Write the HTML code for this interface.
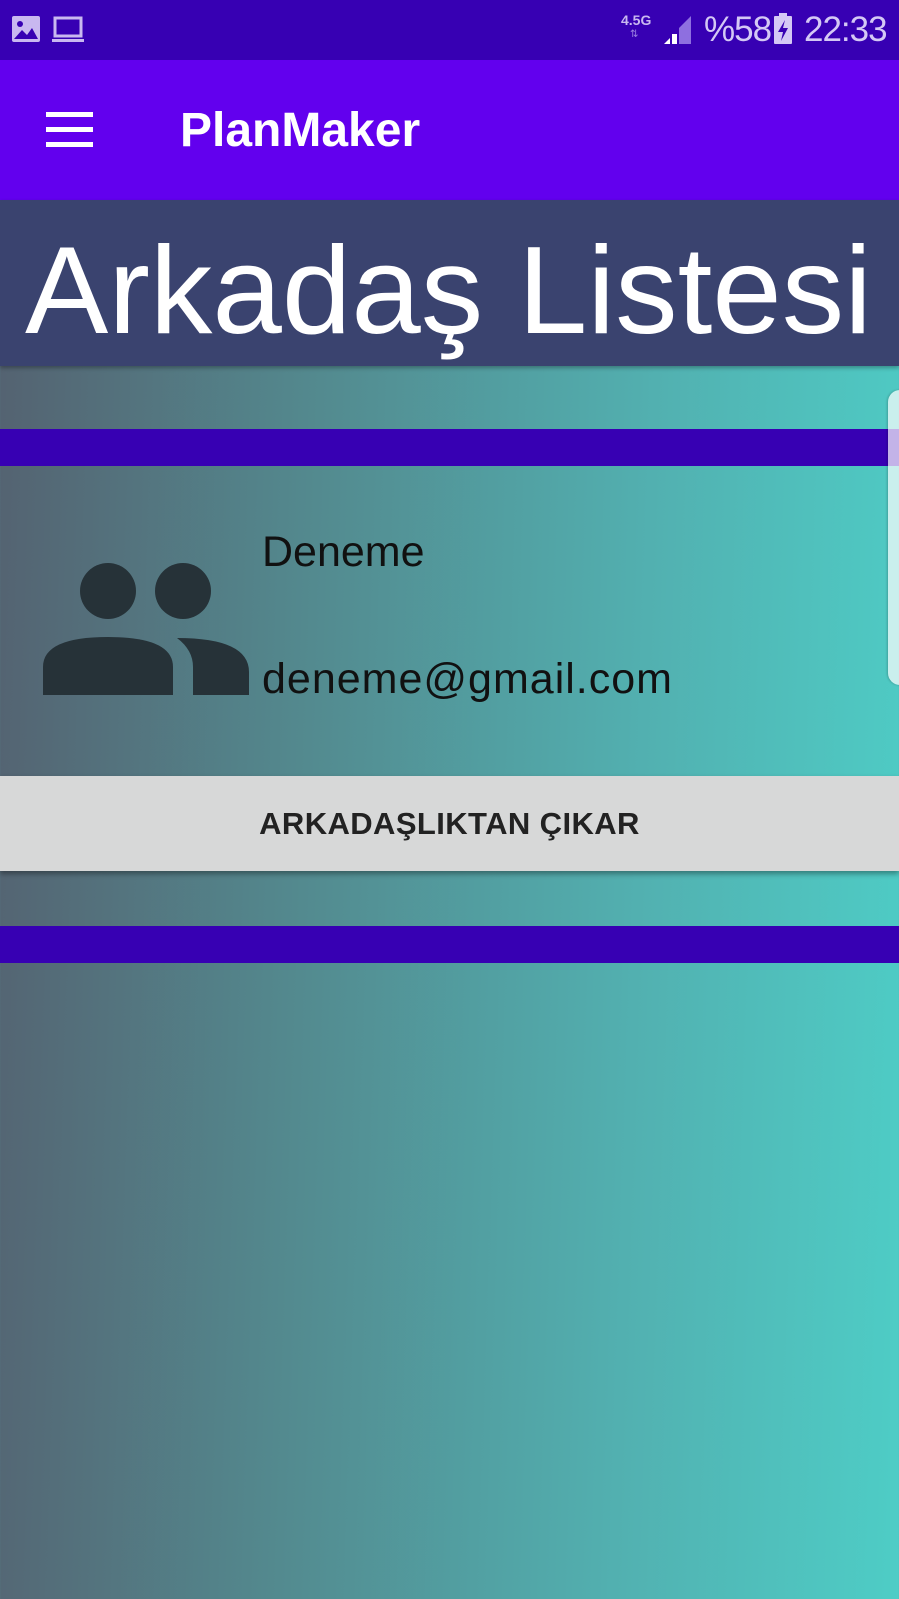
<!DOCTYPE html>
<html><head><meta charset="utf-8"><style>
*{margin:0;padding:0;box-sizing:border-box}
body{width:899px;height:1599px;overflow:hidden;font-family:"Liberation Sans",sans-serif;position:relative;background:linear-gradient(92deg,#546170 0%,#538a8f 35%,#52b0b0 70%,#4ecdc6 100%)}
.abs{position:absolute}
</style></head><body>
<div class="abs" style="left:0;top:0;width:899px;height:60px;background:#3700b3"></div>
<svg class="abs" style="left:11px;top:14px" width="80" height="32" viewBox="0 0 80 32">
<rect x="1" y="2" width="28" height="26" rx="2" fill="#c9b8f0"/>
<circle cx="9" cy="10" r="3" fill="#3700b3"/>
<path d="M3 25 L11 16 L16 21 L21 14 L27 25 Z" fill="#3700b3"/>
<rect x="44" y="4" width="26" height="18" fill="none" stroke="#c9b8f0" stroke-width="3"/>
<rect x="41" y="25" width="32" height="3" fill="#c9b8f0"/>
</svg>
<div class="abs" style="left:621px;top:12px;color:#c9b8f0;font-size:14px;font-weight:bold">4.5G</div>
<div class="abs" style="left:630px;top:29px;color:#9a80e0;font-size:10px">⇅</div>
<svg class="abs" style="left:662px;top:14px" width="30" height="30"><path d="M2 30 L8 30 L8 24 Z" fill="#fff"/><rect x="10" y="20" width="5" height="10" fill="#fff"/><path d="M17 14 L29 2 L29 30 L17 30 Z" fill="#8e6fe0"/></svg>
<div class="abs" style="left:704px;top:10px;color:#d4c8f5;font-size:35px;letter-spacing:-1px">%58</div>
<svg class="abs" style="left:773px;top:13px" width="20" height="32"><rect x="6" y="0" width="8" height="4" fill="#d4c8f5"/><rect x="1" y="3" width="18" height="28" rx="1" fill="#d4c8f5"/><path d="M12 7 L5 19 L10 19 L8 28 L15 15 L10 15 Z" fill="#3700b3"/></svg>
<div class="abs" style="left:804px;top:10px;color:#d4c8f5;font-size:35px;letter-spacing:-1px">22:33</div>
<div class="abs" style="left:0;top:60px;width:899px;height:140px;background:#6200ee"></div>
<div class="abs" style="left:46px;top:112px;width:47px;height:5px;background:#fff"></div>
<div class="abs" style="left:46px;top:127px;width:47px;height:5px;background:#fff"></div>
<div class="abs" style="left:46px;top:142px;width:47px;height:5px;background:#fff"></div>
<div class="abs" style="left:180px;top:103px;color:#fff;font-size:48px;font-weight:bold">PlanMaker</div>
<div class="abs" style="left:0;top:200px;width:899px;height:166px;background:#3a436f;box-shadow:0 2px 4px rgba(0,0,0,.3)"></div>
<svg class="abs" style="left:0;top:200px" width="899" height="166"><text x="25" y="133" font-family="Liberation Sans, sans-serif" font-size="124" fill="#fff" textLength="847" lengthAdjust="spacingAndGlyphs">Arkadaş Listesi</text></svg>
<div class="abs" style="left:0;top:429px;width:899px;height:37px;background:#3700b3"></div>
<div class="abs" style="left:0;top:926px;width:899px;height:37px;background:#3700b3"></div>
<svg class="abs" style="left:43px;top:562px" width="206" height="133" viewBox="0 0 206 133">
<ellipse cx="65" cy="29" rx="28" ry="28" fill="#263238"/>
<ellipse cx="140" cy="29" rx="28" ry="28" fill="#263238"/>
<path d="M0 133 L0 105 Q0 75 65 75 Q130 75 130 105 L130 133 Z" fill="#263238"/>
<path d="M150 133 L150 105 Q150 88 134 76 Q206 76 206 110 L206 133 Z" fill="#263238"/>
</svg>
<div class="abs" style="left:262px;top:528px;color:#111;font-size:43px">Deneme</div>
<div class="abs" style="left:262px;top:655px;color:#111;font-size:43px;letter-spacing:1px">deneme@gmail.com</div>
<div class="abs" style="left:0;top:776px;width:899px;height:95px;background:#d7d8d8;box-shadow:0 3px 5px rgba(0,0,0,.35);text-align:center;line-height:95px;color:#222;font-size:31px;font-weight:bold;letter-spacing:0.4px">ARKADAŞLIKTAN ÇIKAR</div>
<div class="abs" style="left:888px;top:390px;width:20px;height:295px;border-radius:12px 0 0 12px;background:rgba(255,255,255,.7);box-shadow:-1px 0 2px rgba(0,0,0,.2)"></div>
</body></html>
